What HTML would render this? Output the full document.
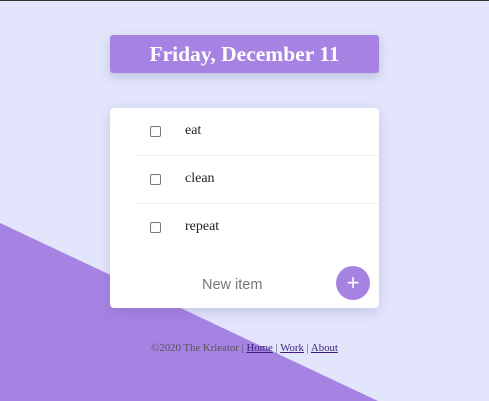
<!DOCTYPE html>
<html><head><style>
body{margin:0;width:489px;height:400px;overflow:hidden;position:relative;background:#e2e5fb;border-top:1px solid #333;box-sizing:border-box;font-family:"Liberation Serif",serif}
.tri{position:absolute;left:0;top:0;width:489px;height:400px}
.hd{position:absolute;left:110px;top:34px;width:269px;height:38px;background:#a683e3;border-radius:3px;box-shadow:0 4px 10px rgba(80,80,140,.25);color:#fff;font-weight:bold;font-size:21.5px;text-align:center;line-height:38px}
.card{position:absolute;left:110px;top:107px;width:269px;height:200px;background:#fff;border-radius:4px;box-shadow:0 4px 12px rgba(80,80,140,.2)}
.row{position:absolute;left:26px;right:0;height:47px;border-bottom:1px solid #eee}
.cb{position:absolute;left:14px;top:18px;width:9px;height:9px;border:1px solid #777;border-radius:2px;background:#fff}
.t{position:absolute;left:49px;top:15px;font-size:14px;color:#222}
.ni{position:absolute;left:92px;top:169px;font-family:"Liberation Sans",sans-serif;font-size:14.5px;color:#777}
.pl{position:absolute;left:226px;top:158px;width:34px;height:34px;border-radius:50%;background:#a683e3;color:#fff;font-family:"Liberation Sans",sans-serif;font-size:22px;text-align:center;line-height:33px}
.ft{position:absolute;left:0;width:489px;top:341px;text-align:center;font-size:10.8px;color:#555}
.ft a{color:#3b1f7a;text-decoration:underline}
</style></head><body>
<svg class="tri"><polygon points="0,222 0,400 378,400" fill="#a683e3"/></svg>
<div class="hd">Friday, December 11</div>
<div class="card">
<div class="row" style="top:0"><div class="cb"></div><div class="t">eat</div></div>
<div class="row" style="top:48px"><div class="cb"></div><div class="t">clean</div></div>
<div class="row" style="top:96px;border:none"><div class="cb"></div><div class="t">repeat</div></div>
<div class="ni">New item</div>
<div class="pl">+</div>
</div>
<div class="ft">©2020 The Krieator | <a>Home</a> | <a>Work</a> | <a>About</a></div>
</body></html>
